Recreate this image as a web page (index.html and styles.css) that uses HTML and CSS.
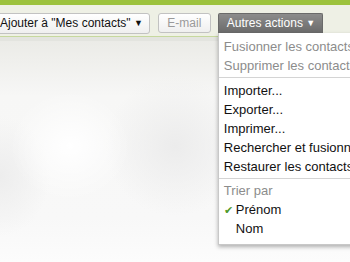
FILE: index.html
```html
<!DOCTYPE html>
<html lang="fr">
<head>
<meta charset="utf-8">
<link rel="stylesheet" href="styles.css">
</head>
<body>
<div class="page">
  <div class="topbar"></div>
  <div class="toolbar">
    <button class="btn btn-add">Ajouter à "Mes contacts" <span class="caret">▼</span></button>
    <button class="btn btn-mail">E-mail</button>
    <div class="more">
      <button class="btn btn-more">Autres actions <span class="caret">▼</span></button>
      <div class="menu">
        <div class="item disabled">Fusionner les contacts</div>
        <div class="item disabled">Supprimer les contacts</div>
        <div class="sep"></div>
        <div class="item">Importer...</div>
        <div class="item">Exporter...</div>
        <div class="item">Imprimer...</div>
        <div class="item">Rechercher et fusionner les doublons</div>
        <div class="item">Restaurer les contacts</div>
        <div class="sep sep2"></div>
        <div class="item disabled">Trier par</div>
        <div class="item check"><span class="tick">✔</span>Prénom</div>
        <div class="item indent">Nom</div>
      </div>
    </div>
  </div>
  <div class="underline"></div>
  <div class="content"></div>
</div>
</body>
</html>
```

FILE: styles.css
```css
html, body {
  margin: 0;
  padding: 0;
  width: 350px;
  height: 262px;
  overflow: hidden;
}
body {
  font-family: "Liberation Sans", Arial, sans-serif;
  font-size: 13px;
  color: #222;
}
.page {
  display: flex;
  flex-direction: column;
  height: 262px;
  overflow: hidden;
}
.topbar {
  height: 5px;
  background: #9cc23c;
  flex: none;
}
.toolbar {
  flex: none;
  height: 32px;
  background: #eef0e5;
  border-bottom: 1px solid #c6d89e;
  display: flex;
  align-items: flex-start;
  padding-top: 8px;
  box-sizing: border-box;
  margin-left: -7px;
  position: relative;
  z-index: 2;
}
.btn {
  font-family: inherit;
  font-size: 12px;
  height: 21px;
  padding: 0 6px;
  border: 1px solid #c2c2c2;
  border-radius: 3px;
  background: linear-gradient(#ffffff, #efefef);
  color: #111;
  line-height: 19px;
  margin: 0;
  white-space: nowrap;
}
.caret {
  font-size: 9px;
  position: relative;
  top: -1px;
}
.btn-add {
  margin-right: 8px;
}
.btn-mail {
  color: #9a9a9a;
  width: 53px;
  height: 20px;
  padding: 0;
  margin-right: 7px;
}
.more {
  position: relative;
}
.btn-more {
  background: linear-gradient(#8c8c8c, #6a6a6a);
  border: 1px solid #6a6a6a;
  border-bottom: none;
  border-radius: 2px 2px 0 0;
  color: #fff;
  height: 20px;
  padding: 0 7px 0 8px;
}
.menu {
  position: absolute;
  top: 20px;
  left: 0;
  width: 150px;
  background: #fff;
  border: 1px solid #c8c8c8;
  border-top: none;
  box-shadow: 0 2px 4px rgba(0,0,0,0.3);
  padding: 4px 0 6px;
  white-space: nowrap;
  overflow: hidden;
}
.item {
  height: 19px;
  line-height: 19px;
  padding-left: 5px;
  color: #111;
}
.item.disabled {
  color: #8c8c8c;
}
.item.indent {
  padding-left: 17px;
}
.tick {
  display: inline-block;
  width: 12px;
  color: #4f9a2c;
  font-size: 11px;
}
.sep {
  height: 1px;
  background: #d4d4d4;
  margin: 2px 0 3px;
}
.sep.sep2 {
  margin: 2px 0 2px;
}
.underline {
  flex: none;
  height: 4px;
  background: #e3e4df;
}
.content {
  flex: 1;
  background:
    radial-gradient(ellipse 60px 55px at 70px 105px, #ffffff, rgba(255,255,255,0)),
    radial-gradient(ellipse 70px 70px at 175px 105px, #ececec, rgba(236,236,236,0)),
    radial-gradient(ellipse 50px 60px at 0px 135px, #ededed, rgba(237,237,237,0)),
    linear-gradient(#ebebe7, #f7f7f6 25%, #f8f8f8 80%, #fcfcfc);
}
```
